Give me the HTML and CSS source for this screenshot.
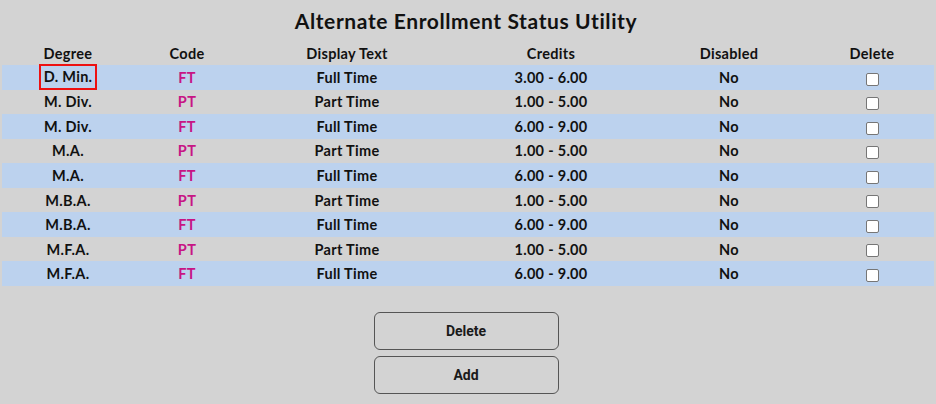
FILE: index.html
```html
<!DOCTYPE html>
<html>
<head>
<meta charset="utf-8">
<link rel="stylesheet" href="styles.css">
</head>
<body>
<div class="page">
  <h1 class="title">Alternate Enrollment Status Utility</h1>
  <table class="grid">
    <colgroup>
      <col class="c1"><col class="c2"><col class="c3"><col class="c4"><col class="c5"><col class="c6">
    </colgroup>
    <thead>
      <tr><th>Degree</th><th>Code</th><th>Display Text</th><th>Credits</th><th>Disabled</th><th>Delete</th></tr>
    </thead>
    <tbody>
      <tr class="alt"><td><span class="sel">D. Min.</span></td><td class="code">FT</td><td>Full Time</td><td>3.00 - 6.00</td><td>No</td><td><span class="chk"></span></td></tr>
      <tr><td>M. Div.</td><td class="code">PT</td><td>Part Time</td><td>1.00 - 5.00</td><td>No</td><td><span class="chk"></span></td></tr>
      <tr class="alt"><td>M. Div.</td><td class="code">FT</td><td>Full Time</td><td>6.00 - 9.00</td><td>No</td><td><span class="chk"></span></td></tr>
      <tr><td>M.A.</td><td class="code">PT</td><td>Part Time</td><td>1.00 - 5.00</td><td>No</td><td><span class="chk"></span></td></tr>
      <tr class="alt"><td>M.A.</td><td class="code">FT</td><td>Full Time</td><td>6.00 - 9.00</td><td>No</td><td><span class="chk"></span></td></tr>
      <tr><td>M.B.A.</td><td class="code">PT</td><td>Part Time</td><td>1.00 - 5.00</td><td>No</td><td><span class="chk"></span></td></tr>
      <tr class="alt"><td>M.B.A.</td><td class="code">FT</td><td>Full Time</td><td>6.00 - 9.00</td><td>No</td><td><span class="chk"></span></td></tr>
      <tr><td>M.F.A.</td><td class="code">PT</td><td>Part Time</td><td>1.00 - 5.00</td><td>No</td><td><span class="chk"></span></td></tr>
      <tr class="alt"><td>M.F.A.</td><td class="code">FT</td><td>Full Time</td><td>6.00 - 9.00</td><td>No</td><td><span class="chk"></span></td></tr>
    </tbody>
  </table>
  <div class="actions">
    <button class="btn">Delete</button>
    <button class="btn">Add</button>
  </div>
</div>
</body>
</html>
```
FILE: styles.css
```css
html, body {
  margin: 0;
  padding: 0;
  background: #d3d3d3;
}
.page {
  width: 936px;
  height: 404px;
  padding: 0 2px;
  box-sizing: border-box;
  font-family: Lato, "Noto Sans", sans-serif;
  color: #111;
}
.title {
  margin: 0;
  padding: 9px 4px 0 0;
  height: 32px;
  box-sizing: border-box;
  text-align: center;
  font-size: 21px;
  font-weight: 700;
  letter-spacing: 0.6px;
  line-height: 24px;
}
.grid {
  width: 932px;
  border-collapse: collapse;
  table-layout: fixed;
  font-size: 14.5px;
  font-weight: 700;
  letter-spacing: 0.3px;
  margin-top: 9px;
}
.c1 { width: 132px; }
.c2 { width: 106px; }
.c3 { width: 214px; }
.c4 { width: 194px; }
.c5 { width: 162px; }
.c6 { width: 124px; }
.grid th {
  height: 24px;
  padding: 0;
  text-align: center;
  font-weight: 700;
  vertical-align: middle;
}
.grid td {
  height: 24.55px;
  padding: 0;
  text-align: center;
  vertical-align: middle;
}
.grid tr.alt td {
  background: #bcd2ee;
}
.code {
  color: #c71585;
}
.sel {
  display: inline-block;
  outline: 2px solid #ee1111;
  outline-offset: 0;
  padding: 1px 3px;
  line-height: 20px;
}
.chk {
  display: inline-block;
  width: 11px;
  height: 11px;
  border: 1px solid #767676;
  border-radius: 2px;
  background: #fff;
  vertical-align: middle;
}
.actions {
  display: flex;
  flex-direction: column;
  align-items: center;
  gap: 6px;
  margin-top: 26px;
  padding-right: 4px;
}
.btn {
  width: 185px;
  height: 38px;
  border: 1px solid #555;
  border-radius: 6px;
  background: #d3d3d3;
  font-family: Roboto, "Liberation Sans", sans-serif;
  font-size: 14px;
  font-weight: 700;
  color: #1a1a1a;
  padding: 0;
}
```
